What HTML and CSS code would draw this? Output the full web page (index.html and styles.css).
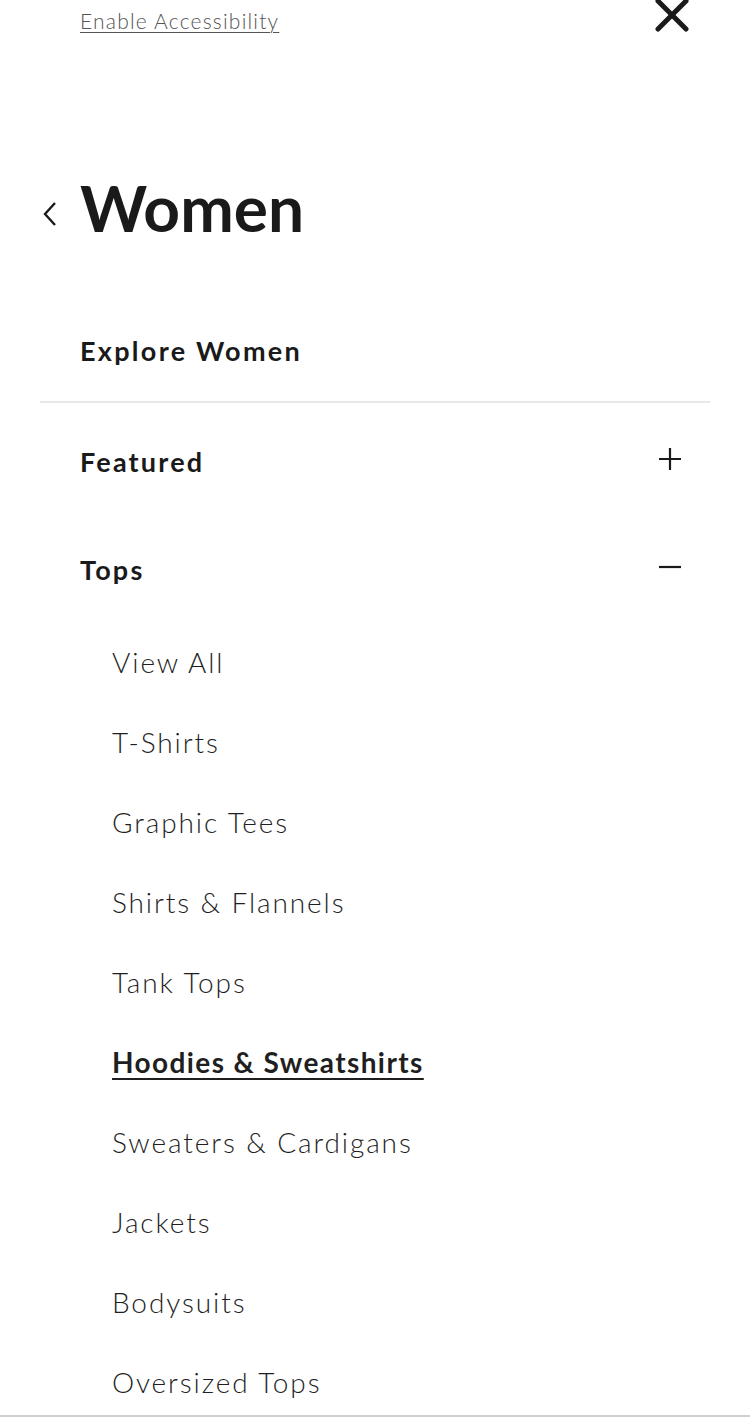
FILE: index.html
```html
<!DOCTYPE html>
<html lang="en">
<head>
<meta charset="utf-8">
<title>Women menu</title>
<link rel="stylesheet" href="styles.css">
</head>
<body>
<div class="page">
  <div class="menu">
    <div class="topbar">
      <a class="a11y" href="#">Enable Accessibility</a>
      <svg class="close" width="36" height="36" viewBox="0 0 36 36"><path d="M4 4 L32 32 M32 4 L4 32" stroke="#1a1a1a" stroke-width="5" stroke-linecap="round" fill="none"/></svg>
    </div>
    <div class="title-row">
      <svg class="back" width="16" height="26" viewBox="0 0 16 26"><path d="M13 2 L3 13 L13 24" stroke="#1a1a1a" stroke-width="2.4" fill="none"/></svg>
      <h1 class="title">Women</h1>
    </div>
    <div class="explore">Explore Women</div>
    <div class="divider"></div>
    <div class="section featured">
      <span class="section-label">Featured</span>
      <svg class="toggle" width="24" height="24" viewBox="0 0 24 24"><path d="M12 1 V23 M1 12 H23" stroke="#1a1a1a" stroke-width="2.2" fill="none"/></svg>
    </div>
    <div class="section tops">
      <span class="section-label">Tops</span>
      <svg class="toggle" width="24" height="24" viewBox="0 0 24 24"><path d="M1 12 H23" stroke="#1a1a1a" stroke-width="2.2" fill="none"/></svg>
    </div>
    <ul class="sublist">
      <li class="item">View All</li>
      <li class="item">T-Shirts</li>
      <li class="item">Graphic Tees</li>
      <li class="item">Shirts &amp; Flannels</li>
      <li class="item">Tank Tops</li>
      <li class="item active">Hoodies &amp; Sweatshirts</li>
      <li class="item">Sweaters &amp; Cardigans</li>
      <li class="item">Jackets</li>
      <li class="item">Bodysuits</li>
      <li class="item">Oversized Tops</li>
    </ul>
  </div>
  <div class="bottomline"></div>
</div>
</body>
</html>
```

FILE: styles.css
```css
html, body {
  margin: 0;
  padding: 0;
  background: #fff;
}
body {
  font-family: "Lato", "Noto Sans", sans-serif;
  color: #1a1a1a;
}
.page {
  width: 750px;
  height: 1417px;
  display: flex;
  flex-direction: column;
  overflow: hidden;
}
.menu {
  height: 1415px;
  overflow: hidden;
  flex: none;
}
.topbar {
  height: 158px;
  display: flex;
  justify-content: space-between;
  align-items: flex-start;
  padding: 0 60px 0 80px;
}
.a11y {
  font-size: 21px;
  line-height: 42px;
  font-weight: 300;
  color: #555;
  text-decoration: underline;
  text-underline-offset: 3px;
  text-decoration-thickness: 1px;
  letter-spacing: 1.2px;
}
.close {
  margin-top: -3px;
}
.title-row {
  height: 100px;
  display: flex;
  align-items: center;
}
.back {
  margin-left: 42px;
  margin-right: 22px;
  margin-top: 12px;
}
.title {
  margin: 0;
  font-size: 64px;
  font-weight: 700;
  letter-spacing: 0;
  line-height: 1;
}
.explore {
  padding: 72px 0 29px 80px;
  font-size: 27px;
  line-height: 42px;
  font-weight: 700;
  letter-spacing: 2.3px;
}
.divider {
  height: 2px;
  margin: 0 40px;
  background: #e8e8e8;
}
.section {
  display: flex;
  justify-content: space-between;
  align-items: center;
  padding: 0 68px 0 80px;
}
.featured { height: 116px; }
.tops { height: 100px; }
.section-label {
  font-size: 27px;
  font-weight: 700;
  letter-spacing: 2.2px;
}
.toggle {
  margin-bottom: 5px;
}
.sublist {
  list-style: none;
  margin: 0;
  padding: 3px 0 0 112px;
}
.item {
  height: 80px;
  display: flex;
  align-items: center;
  font-size: 28px;
  font-weight: 300;
  letter-spacing: 1.9px;
  color: #1f1f1f;
}
.item.active {
  font-weight: 700;
  letter-spacing: 1.4px;
  text-decoration: underline;
  text-decoration-thickness: 2px;
  text-underline-offset: 5px;
}
.bottomline {
  height: 2px;
  background: #cfcfcf;
  flex: none;
}
```
